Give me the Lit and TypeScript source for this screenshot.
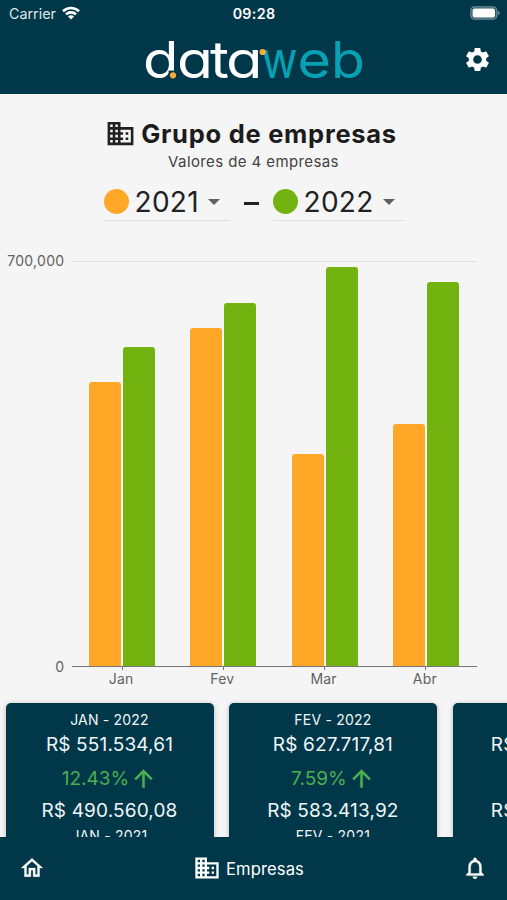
import { LitElement, html, css, svg } from "lit";
import { customElement } from "lit/decorators.js";

interface Month { label: string; previous: number; current: number; }
interface Card { month: string; current: string; change: string; previous: string; }

const MONTHS: Month[] = [
  { label: "Jan", previous: 491500, current: 552000 },
  { label: "Fev", previous: 583700, current: 628000 },
  { label: "Mar", previous: 366500, current: 689300 },
  { label: "Abr", previous: 419000, current: 664000 },
];
const MAX = 700000;

const CARDS: Card[] = [
  { month: "JAN", current: "R$ 551.534,61", change: "12.43%", previous: "R$ 490.560,08" },
  { month: "FEV", current: "R$ 627.717,81", change: "7.59%", previous: "R$ 583.413,92" },
  { month: "MAR", current: "R$ 689.215,38", change: "88.04%", previous: "R$ 366.518,26" },
];

const icon = (path: string, cls: string) =>
  html`<svg class="icon ${cls}" viewBox="0 0 24 24"><path d=${path} /></svg>`;

const BUILDING = "M12 7V3H2v18h20V7H12zM6 19H4v-2h2v2zm0-4H4v-2h2v2zm0-4H4V9h2v2zm0-4H4V5h2v2zm4 12H8v-2h2v2zm0-4H8v-2h2v2zm0-4H8V9h2v2zm0-4H8V5h2v2zm10 12h-8v-2h2v-2h-2v-2h2v-2h-2V9h8v10zm-2-8h-2v2h2v-2zm0 4h-2v2h2v-2z";
const GEAR = "M19.14 12.94c.04-.3.06-.61.06-.94 0-.32-.02-.64-.07-.94l2.03-1.58c.18-.14.23-.41.12-.61l-1.92-3.32c-.12-.22-.37-.29-.59-.22l-2.39.96c-.5-.38-1.03-.7-1.62-.94l-.36-2.54c-.04-.24-.24-.41-.48-.41h-3.84c-.24 0-.43.17-.47.41l-.36 2.54c-.59.24-1.13.57-1.62.94l-2.39-.96c-.22-.08-.47 0-.59.22L2.74 8.87c-.12.21-.08.47.12.61l2.03 1.58c-.05.3-.09.63-.09.94s.02.64.07.94l-2.03 1.58c-.18.14-.23.41-.12.61l1.92 3.32c.12.22.37.29.59.22l2.39-.96c.5.38 1.03.7 1.62.94l.36 2.54c.05.24.24.41.48.41h3.84c.24 0 .44-.17.47-.41l.36-2.54c.59-.24 1.13-.56 1.62-.94l2.39.96c.22.08.47 0 .59-.22l1.92-3.32c.12-.22.07-.47-.12-.61l-2.01-1.58zM12 15.6c-1.98 0-3.6-1.62-3.6-3.6s1.62-3.6 3.6-3.6 3.6 1.62 3.6 3.6-1.62 3.6-3.6 3.6z";
const HOME = "M12 5.69l5 4.5V18h-2v-6H9v6H7v-7.81l5-4.5M12 3L2 12h3v8h6v-6h2v6h6v-8h3L12 3z";
const BELL = "M12 22c1.1 0 2-.9 2-2h-4c0 1.1.9 2 2 2zm6-6v-5c0-3.07-1.63-5.64-4.5-6.32V4c0-.83-.67-1.5-1.5-1.5s-1.5.67-1.5 1.5v.68C7.64 5.36 6 7.92 6 11v5l-2 2v1h16v-1l-2-2zm-2 1H8v-6c0-2.48 1.51-4.5 4-4.5s4 2.02 4 4.5v6z";
const ARROW_UP = "M4 12l1.41 1.41L11 7.83V20h2V7.83l5.58 5.59L20 12l-8-8-8 8z";

/* Wordmark letters: character, left edge, advance width, colour class. */
const LETTERS: [string, number, number, string][] = [
  ["d", 2, 35.5, "white"],
  ["a", 36, 36, "white"],
  ["t", 69, 19, "white"],
  ["a", 85, 36.5, "white"],
  ["w", 120.5, 36, "teal"],
  ["e", 156.5, 33.5, "teal"],
  ["b", 190, 34, "teal"],
];

@customElement("brand-logo")
class BrandLogo extends LitElement {
  static styles = css`
    :host { display: block; }
    .logo { display: block; width: 226px; height: 46px; }
    .letter { font-family: Inter, sans-serif; font-size: 51px; font-feature-settings: "cv11"; }
    .white { fill: #fff; }
    .teal { fill: #06a1b3; }
    .cut { fill: #003849; }
    .dot { fill: #f9ab3c; }
  `;
  render() {
    return html`<svg class="logo" viewBox="0 0 226 46" aria-label="dataweb">
      ${LETTERS.map(([c, x, w, cls]) => svg`<text class="letter ${cls}" x=${x} y="41" textLength=${w} lengthAdjust="spacingAndGlyphs">${c}</text>`)}
      <rect class="cut" x="27.6" y="33.6" width="9" height="8.4" />
      <circle class="dot" cx="32" cy="38.3" r="3.1" />
      <circle class="dot" cx="121.6" cy="15" r="3.1" />
    </svg>`;
  }
}

@customElement("status-bar")
class StatusBar extends LitElement {
  static styles = css`
    :host { display: grid; grid-template-columns: 1fr auto 1fr; align-items: center; height: 27px; padding: 0 7px 0 9px; box-sizing: border-box; }
    .carrier { display: flex; align-items: center; gap: 6px; font-size: 14.3px; color: #dfe7ea; }
    .wifi { width: 18px; height: 14px; margin-top: -2px; }
    .arc { fill: none; stroke: #fff; stroke-width: 2.6; }
    .fill { fill: #fff; }
    .time { font-size: 14.3px; font-weight: 600; letter-spacing: 0.3px; color: #fff; margin-right: 1px; }
    .battery { width: 30px; height: 14px; justify-self: end; margin-top: -1px; }
    .shell { fill: #2c5866; stroke: #6f8d98; stroke-width: 1.2; }
    .tip { fill: #6f8d98; }
  `;
  render() {
    return html`
      <div class="carrier"><span>Carrier</span>
        <svg class="wifi" viewBox="0 0 18 14">
          <path class="arc" d="M1 5.2a11.6 11.6 0 0 1 16 0M4 8.4a7.2 7.2 0 0 1 10 0" />
          <path class="fill" d="M9 13.6l-3-3a4.2 4.2 0 0 1 6 0z" />
        </svg>
      </div>
      <div class="time">09:28</div>
      <svg class="battery" viewBox="0 0 30 14">
        <rect class="shell" x="0.8" y="0.8" width="26" height="12.4" rx="3.8" />
        <rect class="fill" x="2.6" y="2.4" width="22.4" height="9.2" rx="2" />
        <path class="tip" d="M27.8 4.8q2 .6 2 2.2t-2 2.2z" />
      </svg>`;
  }
}

@customElement("bar-chart")
class BarChart extends LitElement {
  static styles = css`
    :host { display: grid; grid-template-columns: 64.5px 405px; grid-template-rows: 406px 24px; column-gap: 7px; color: #616161; font-size: 14px; }
    .scale { display: flex; flex-direction: column; justify-content: space-between; align-items: flex-end; margin: -9px 0; line-height: 18px; letter-spacing: 0.3px; }
    .plot { display: grid; grid-template-columns: repeat(4, 1fr); box-sizing: border-box; box-shadow: inset 0 1px #e0e0e0; border-bottom: 1px solid #757575; }
    .group { display: flex; justify-content: center; align-items: flex-end; gap: 2px; height: 100%; }
    .bar { width: 32px; border-radius: 3px 3px 0 0; }
    .previous { background: #ffa726; }
    .current { background: #73b310; }
    .months { grid-column: 2; display: grid; grid-template-columns: repeat(4, 1fr); }
    .month { display: flex; flex-direction: column; align-items: center; line-height: 18px; letter-spacing: 0.2px; }
    .tick { width: 1px; height: 3px; background: #757575; }
    .name { margin-right: 2px; }
  `;
  render() {
    return html`
      <div class="scale"><span>700,000</span><span>0</span></div>
      <div class="plot">
        ${MONTHS.map((m) => html`<div class="group">
          <div class="bar previous" style="height:${(m.previous / MAX) * 100}%"></div>
          <div class="bar current" style="height:${(m.current / MAX) * 100}%"></div>
        </div>`)}
      </div>
      <div class="months">
        ${MONTHS.map((m) => html`<div class="month"><i class="tick"></i><span class="name">${m.label}</span></div>`)}
      </div>`;
  }
}

@customElement("app-root")
class AppRoot extends LitElement {
  static styles = css`
    :host { display: flex; flex-direction: column; width: 507px; height: 900px; overflow: hidden; background: #f5f5f5; font-family: Inter, "Liberation Sans", sans-serif; color: #212121; }
    .icon { display: block; flex: none; fill: currentColor; }
    .top { flex: none; height: 94px; background: #003849; }
    .bar { display: grid; grid-template-columns: 1fr 226px 1fr; align-items: center; height: 66px; padding: 0 14px; color: #fff; }
    .brand { grid-column: 2; margin-bottom: 1px; }
    .gear { width: 29px; height: 29px; justify-self: end; margin: -1px 1px 0 0; }
    .main { flex: 1; min-height: 0; display: flex; flex-direction: column; overflow: hidden; }
    .heading { display: flex; justify-content: center; align-items: center; gap: 5px; height: 30px; margin-top: 24px; padding-right: 5px; }
    .title { font-size: 25.5px; font-weight: 750; letter-spacing: 0.73px; white-space: nowrap; color: #1c1c1c; }
    .big { width: 31px; height: 31px; margin-top: 1px; }
    .subtitle { text-align: center; font-size: 15px; line-height: 20px; letter-spacing: 0.4px; margin-top: 4px; color: #424242; }
    .years { display: flex; justify-content: center; gap: 14px; margin-top: 12px; height: 37px; }
    .select { display: flex; align-items: center; width: 126px; box-sizing: border-box; border-bottom: 1px solid #dedede; }
    .wide { width: 131px; }
    .swatch { width: 25px; height: 25px; border-radius: 50%; margin: -2px 6px 0 0; }
    .orange { background: #ffa726; }
    .green { background: #73b310; }
    .year { font-size: 28px; line-height: 36px; letter-spacing: 0.3px; }
    .caret { width: 0; height: 0; margin-left: 9px; border: 6px solid transparent; border-top-color: #616161; border-bottom: 0; }
    .dash { width: 15px; height: 3px; background: #212121; align-self: center; margin-top: 2px; }
    .chart { margin-top: 40px; flex: none; }
    .cards { display: flex; gap: 15.4px; margin: 12px 0 0 6px; }
    .card { flex: none; width: 208px; height: 164px; box-sizing: border-box; padding-top: 6px; border-radius: 5px; background: #003849; color: #eef6f8; text-align: center; box-shadow: 0 1px 5px rgba(0, 0, 0, 0.25); }
    .period { font-size: 14px; line-height: 22px; letter-spacing: 0.2px; margin-right: 1px; }
    .amount { font-size: 19px; line-height: 28px; letter-spacing: 0.15px; margin-right: 1px; }
    .change { display: flex; justify-content: center; align-items: center; gap: 1px; height: 38px; margin-right: 1px; font-size: 19px; color: #4caf50; }
    .up { width: 27px; height: 27px; stroke: currentColor; stroke-width: 0.4; }
    .nav { flex: none; display: grid; grid-template-columns: 1fr auto 1fr; align-items: center; height: 63px; padding: 0 19px; box-sizing: border-box; background: #003849; color: #fff; }
    .tab { display: flex; align-items: center; gap: 5px; font-size: 16.6px; letter-spacing: 0.1px; padding-right: 10px; }
    .small { width: 26px; height: 26px; margin-top: -1px; stroke: currentColor; stroke-width: 0.25; }
    .mid { width: 28px; height: 28px; margin-top: -1px; }
    .end { width: 26px; height: 26px; justify-self: end; margin-top: -1px; stroke: currentColor; stroke-width: 0.3; }
  `;
  render() {
    return html`
      <header class="top">
        <status-bar></status-bar>
        <div class="bar"><brand-logo class="brand"></brand-logo>${icon(GEAR, "gear")}</div>
      </header>
      <main class="main">
        <div class="heading">${icon(BUILDING, "big")}<span class="title">Grupo de empresas</span></div>
        <div class="subtitle">Valores de 4 empresas</div>
        <div class="years">
          <div class="select"><i class="swatch orange"></i><span class="year">2021</span><i class="caret"></i></div>
          <i class="dash"></i>
          <div class="select wide"><i class="swatch green"></i><span class="year">2022</span><i class="caret"></i></div>
        </div>
        <bar-chart class="chart"></bar-chart>
        <div class="cards">
          ${CARDS.map((c) => html`<section class="card">
            <div class="period">${c.month} - 2022</div>
            <div class="amount">${c.current}</div>
            <div class="change"><span>${c.change}</span>${icon(ARROW_UP, "up")}</div>
            <div class="amount">${c.previous}</div>
            <div class="period">${c.month} - 2021</div>
          </section>`)}
        </div>
      </main>
      <nav class="nav">
        ${icon(HOME, "small")}
        <div class="tab">${icon(BUILDING, "mid")}<span>Empresas</span></div>
        ${icon(BELL, "end")}
      </nav>`;
  }
}
